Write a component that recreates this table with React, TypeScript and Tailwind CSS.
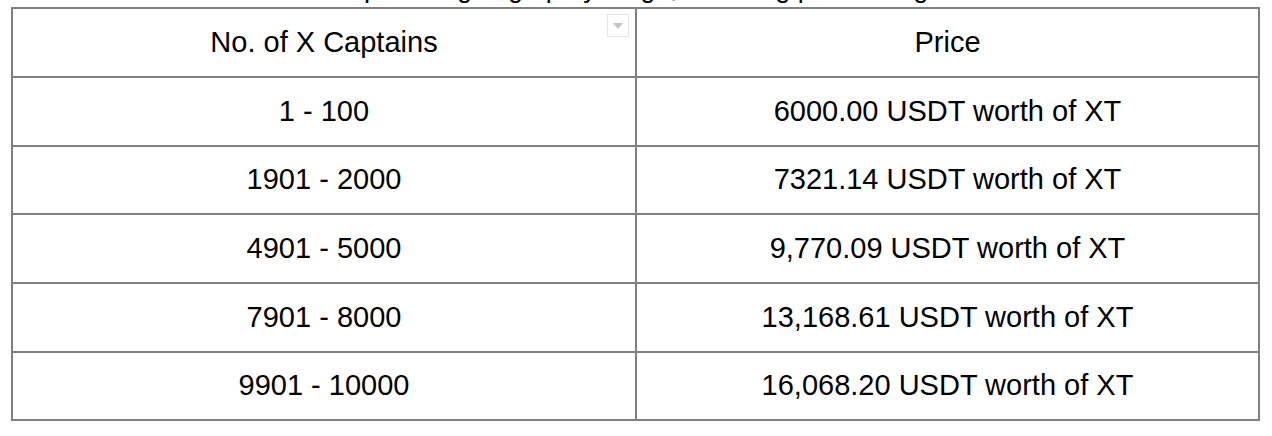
import React from "react";

const rows: [string, string, string][] = [
  ["1 - 100", "6000.00 USDT worth of XT", "h-[69px]"],
  ["1901 - 2000", "7321.14 USDT worth of XT", "h-[68px]"],
  ["4901 - 5000", "9,770.09 USDT worth of XT", "h-[69px]"],
  ["7901 - 8000", "13,168.61 USDT worth of XT", "h-[69px]"],
  ["9901 - 10000", "16,068.20 USDT worth of XT", "h-[68px]"],
];

export default function App() {
  return (
    <div
      className="w-[1272px] h-[436px] bg-white overflow-hidden text-black"
      style={{ fontFamily: '"Liberation Sans", Arial, sans-serif' }}
    >
      <div className="h-[7px] overflow-hidden relative">
        <div className="absolute left-[310px] top-[-25px] text-[27px] leading-[27px] whitespace-nowrap">
          The price is going up by stage, following price rising
        </div>
      </div>
      <table className="ml-[11px] w-[1249px] border-collapse border-2 border-[#808080] text-[29px] table-fixed">
        <colgroup>
          <col className="w-[624px]" />
          <col />
        </colgroup>
        <thead>
          <tr className="h-[69px]">
            <th className="border-2 border-[#808080] font-normal text-center align-middle relative p-0">
              No. of X Captains
              <span className="absolute top-[5px] right-[6px] w-[22px] h-[23px] border border-[#e4e4e4] bg-white flex items-center justify-center">
                <svg width="10" height="6" viewBox="0 0 10 6">
                  <path d="M0 0 L10 0 L5 6 Z" fill="#c4c4c4" />
                </svg>
              </span>
            </th>
            <th className="border-2 border-[#808080] font-normal text-center align-middle p-0">
              Price
            </th>
          </tr>
        </thead>
        <tbody>
          {rows.map(([a, b, h]) => (
            <tr key={a} className={h}>
              <td className="border-2 border-[#808080] text-center align-middle p-0">{a}</td>
              <td className="border-2 border-[#808080] text-center align-middle p-0">{b}</td>
            </tr>
          ))}
        </tbody>
      </table>
    </div>
  );
}
